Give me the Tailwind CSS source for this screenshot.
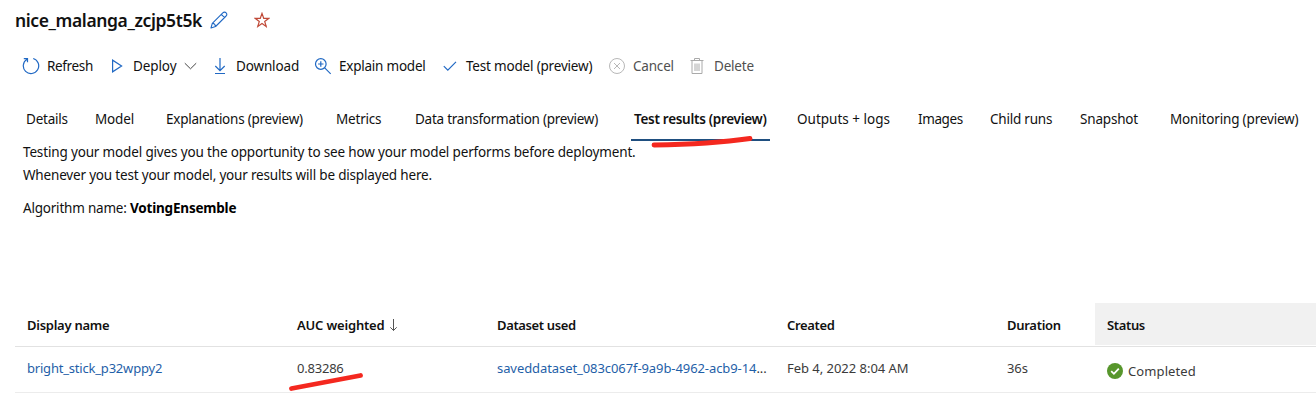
<!DOCTYPE html>
<html lang="en">
<head>
<meta charset="utf-8">
<title>nice_malanga_zcjp5t5k</title>
<script src="https://cdn.jsdelivr.net/npm/@tailwindcss/browser@4"></script>
</head>
<body class="relative h-[405px] w-[1316px] overflow-hidden bg-white font-['Noto_Sans','Open_Sans',sans-serif] text-[13.5px] leading-5 whitespace-nowrap text-[#111]">
<header class="flex h-10 items-center pl-[15px]">
<h1 class="w-[195px] text-[17.5px] font-semibold tracking-[-0.39px] text-[#111]">nice_malanga_zcjp5t5k</h1>
<svg class="h-[18px] w-[18px]" viewBox="0 0 18 18" fill="none" stroke="#2169c4" stroke-width="1.1" stroke-linejoin="round"><path d="M1 17l1.3-4.7L12.8 1.8c1-1 2.5-.9 3.3 0 .8.9.9 2.200 0 3.200L5.600 15.500z M11.300 3.300l3.300 3.300 M2.300 12.300c1.700.2 3 1.500 3.300 3.200"/></svg>
<svg class="ml-[26px] h-4 w-4" viewBox="0 0 16 16" fill="none" stroke="#c04a38" stroke-width="1.200"><path d="M8 1.400l1.700 4.900h5.100l-4.100 3.100 1.500 5L8 11.400l-4.200 3 1.500-5-4.100-3.100h5.100z"/></svg>
</header>
<nav class="mt-4 flex h-5 items-center pl-[22px]">
<svg class="h-[18px] w-[18px]" viewBox="0 0 18 18" fill="none" stroke="#2169c4" stroke-width="1.200"><path d="M11.200 1.500A7.700 7.700 0 1 1 5 2.300M1.800 1.600H5.500V5.200"/></svg>
<span class="ml-[7px] w-[64px] tracking-[-0.36px]">Refresh</span>
<svg class="h-[14px] w-[12px]" viewBox="0 0 12 14" fill="none" stroke="#2169c4" stroke-width="1.200"><path d="M1.600 1.200v11.600L10.600 7z"/></svg>
<span class="ml-[10px] w-[51px] tracking-[-0.1px]">Deploy</span>
<svg class="h-[8px] w-[13px]" viewBox="0 0 13 8" fill="none" stroke="#444" stroke-width="1"><path d="M.8 1.200l5.700 5.600 5.700-5.600"/></svg>
<svg class="ml-[17px] h-[18px] w-[12px]" viewBox="0 0 12 18" fill="none" stroke="#2169c4" stroke-width="1.200"><path d="M6 1v12.500M1.300 9L6 13.700 10.700 9M1 16.500h10"/></svg>
<span class="ml-[10px] w-[78px] tracking-[-0.15px]">Download</span>
<svg class="h-[18px] w-[18px]" viewBox="0 0 18 18" fill="none" stroke="#2169c4" stroke-width="1.200"><circle cx="6.800" cy="7" r="5.300"/><path d="M10.700 10.800l6 6M6.800 4.300v5.400M4.100 7h5.400"/></svg>
<span class="ml-[7px] w-[104px] tracking-[-0.23px]">Explain model</span>
<svg class="h-[12px] w-[14px]" viewBox="0 0 14 12" fill="none" stroke="#2169c4" stroke-width="1.200"><path d="M.8 6.200l4 4L13 1.800"/></svg>
<span class="ml-[9px] w-[142px] tracking-[-0.19px]">Test model (preview)</span>
<svg class="h-[18px] w-[18px]" viewBox="0 0 18 18" fill="none" stroke="#b8b8b8" stroke-width="1"><circle cx="9" cy="9" r="7.500"/><path d="M6 6l6 6M12 6l-6 6"/></svg>
<span class="ml-[7px] w-[57px] tracking-[-0.2px] text-[#505050]">Cancel</span>
<svg class="h-[18px] w-[14px]" viewBox="0 0 14 18" fill="none" stroke="#aaa" stroke-width="1"><path d="M.5 3.500h13M2 3.500v13h10v-13M4.500 3.500v-2h5v2M5 6.500v7.500M7 6.500v7.500M9 6.500v7.500"/></svg>
<span class="ml-[10px] tracking-[-0.2px] text-[#505050]">Delete</span>
</nav>
<nav class="mt-[23px] flex h-[42px] pt-[10px] pl-[26px]">
<span class="w-[69px] tracking-[-0.22px]">Details</span>
<span class="w-[71px] tracking-[-0.15px]">Model</span>
<span class="w-[170px] tracking-[-0.24px]">Explanations (preview)</span>
<span class="w-[79px] tracking-[-0.2px]">Metrics</span>
<span class="w-[216px] tracking-[-0.25px]">Data transformation (preview)</span>
<span class="h-8 w-[139px] border-b-2 border-[#1f4f80] pl-[3px] font-semibold tracking-[-0.29px]">Test results (preview)</span>
<span class="ml-[27px] w-[121px]">Outputs + logs</span>
<span class="w-[72px] tracking-[-0.4px]">Images</span>
<span class="w-[90px] tracking-[-0.22px]">Child runs</span>
<span class="w-[90px] tracking-[-0.18px]">Snapshot</span>
<span class="tracking-[-0.17px]">Monitoring (preview)</span>
</nav>
<section class="pt-[1px] pl-[23px]">
<p class="tracking-[-0.155px]">Testing your model gives you the opportunity to see how your model performs before deployment.</p>
<p class="mt-[3px] tracking-[-0.18px]">Whenever you test your model, your results will be displayed here.</p>
<p class="mt-[13px] flex"><span class="w-[107px] tracking-[-0.21px]">Algorithm name: </span><b class="tracking-[-0.2px] text-black">VotingEnsemble</b></p>
</section>
<main class="mt-[85px] ml-[15px] text-[13px]">
<div class="flex h-[44px] border-b border-[#e2e2e2] font-semibold leading-[44px]">
<div class="w-[270px] pl-3 tracking-[-0.26px]">Display name</div>
<div class="flex w-[200px] items-center pl-3 tracking-[-0.18px]"><span class="w-[92px]">AUC weighted</span><svg class="h-[14px] w-[9px]" viewBox="0 0 9 14" fill="none" stroke="#555" stroke-width="1"><path d="M4.500 1v11.500M1.300 9.300l3.200 3.200 3.200-3.200"/></svg></div>
<div class="w-[290px] pl-3 tracking-[-0.36px]">Dataset used</div>
<div class="w-[220px] pl-3 tracking-[-0.32px]">Created</div>
<div class="w-[100px] pl-3 tracking-[-0.28px]">Duration</div>
<div class="h-[42px] flex-1 bg-[#f1f1f1] pl-3 tracking-[-0.35px]">Status</div>
</div>
<div class="flex h-[46px] border-b border-[#ececec] leading-[43px] text-[#3b3b3b]">
<div class="w-[270px] pl-3 tracking-[-0.2px] text-[#1f5fa8]">bright_stick_p32wppy2</div>
<div class="w-[200px] pl-3 tracking-[-0.22px]">0.83286</div>
<div class="w-[290px] pl-3 tracking-[-0.08px] text-[#1f5fa8]">saveddataset_083c067f-9a9b-4962-acb9-14<span class="text-[#333]">...</span></div>
<div class="w-[220px] pl-3 tracking-[-0.03px]">Feb 4, 2022 8:04 AM</div>
<div class="w-[100px] pl-3 tracking-[-0.1px]">36s</div>
<div class="flex flex-1 items-center pt-[3px] pl-3"><svg class="mr-[5px] h-4 w-4" viewBox="0 0 16 16"><circle cx="8" cy="8" r="8" fill="#57962c"/><path d="M4.200 8.200l2.700 2.600 4.900-5.200" fill="none" stroke="#fff" stroke-width="1.800"/></svg><span class="tracking-[0.1px]">Completed</span></div>
</div>
</main>
<svg class="absolute top-0 left-0 h-[405px] w-[1316px]" viewBox="0 0 1316 405" fill="none" stroke="#f4281f" stroke-width="4.800" stroke-linecap="round"><path d="M654 145C685 144.500 722 142.500 750 138.500M291.500 388.500L360.500 375.500"/></svg>
</body>
</html>
